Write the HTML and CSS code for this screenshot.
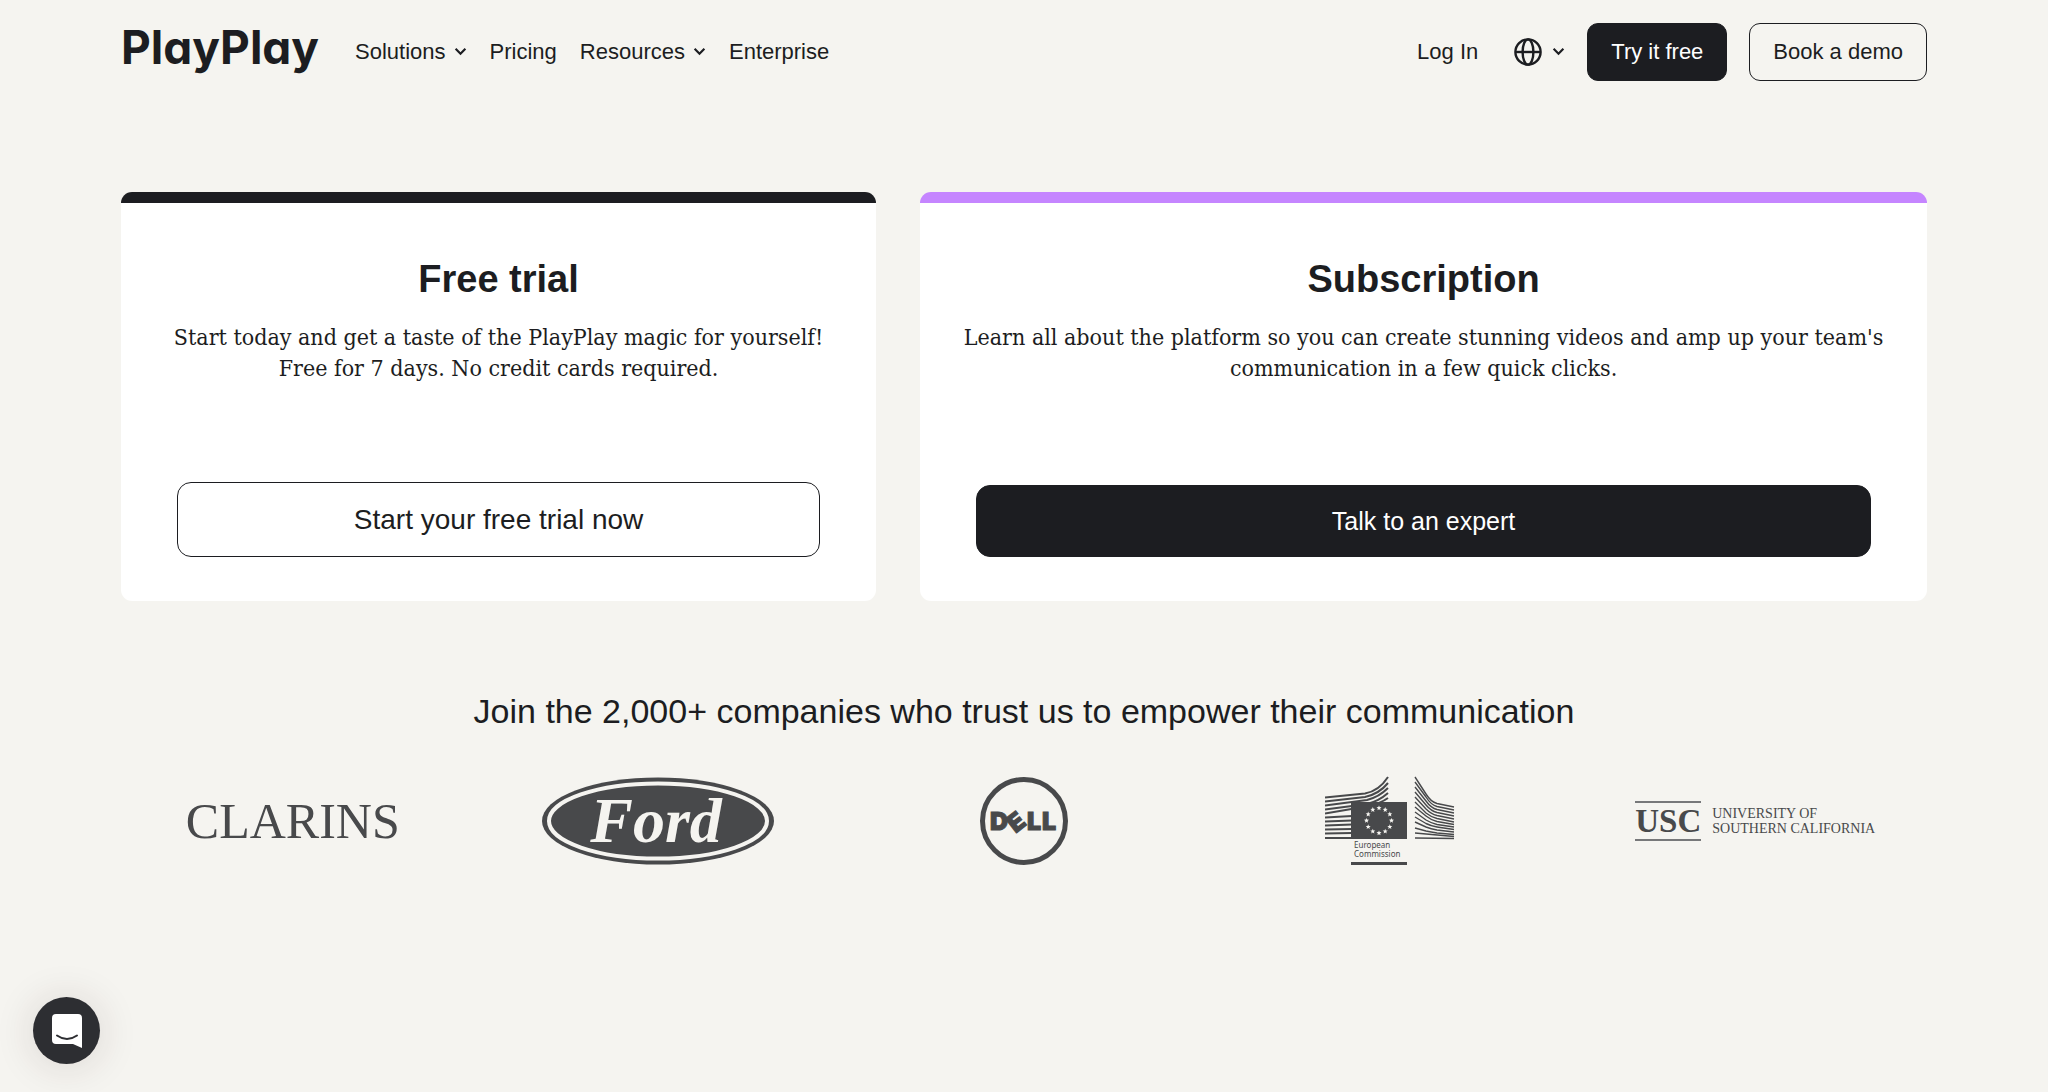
FILE: index.html
```html
<!DOCTYPE html>
<html lang="en">
	<head>
		<meta charset="UTF-8">
		<meta name="viewport" content="width=device-width, initial-scale=1">
		<title>PlayPlay Pricing</title>
		<link rel="stylesheet" href="styles.css">
	</head>
	<body>
		<header class="header">
			<a class="logo" href="#">PlayPlay</a>
			<nav class="nav">
				<button class="navitem" type="button">Solutions
					<svg class="chevron" viewBox="0 0 12 8"><path d="M1.5 1.5 L6 6 L10.5 1.5"/></svg>
				</button>
				<a class="navitem" href="#">Pricing</a>
				<button class="navitem" type="button">Resources
					<svg class="chevron" viewBox="0 0 12 8"><path d="M1.5 1.5 L6 6 L10.5 1.5"/></svg>
				</button>
				<a class="navitem" href="#">Enterprise</a>
			</nav>
			<div class="actions">
				<a class="navitem login" href="#">Log In</a>
				<button class="navitem language" type="button" aria-label="Language">
					<svg class="globe" viewBox="0 0 28 28">
						<circle cx="14" cy="14" r="12.6"/>
						<ellipse cx="14" cy="14" rx="5.4" ry="12.6"/>
						<path d="M1.4 14 H26.6"/>
					</svg>
					<svg class="chevron" viewBox="0 0 12 8"><path d="M1.5 1.5 L6 6 L10.5 1.5"/></svg>
				</button>
				<button class="btn dark" type="button">Try it free</button>
				<button class="btn outline" type="button">Book a demo</button>
			</div>
		</header>

		<main>
			<section class="plans">
				<div class="card trial">
					<h2>Free trial</h2>
					<p>Start today and get a taste of the PlayPlay magic for yourself!<br>Free for 7 days. No credit cards required.</p>
					<button class="cta outline" type="button">Start your free trial now</button>
				</div>
				<div class="card subscription">
					<h2>Subscription</h2>
					<p>Learn all about the platform so you can create stunning videos and amp up your team's communication in a few quick clicks.</p>
					<button class="cta dark" type="button">Talk to an expert</button>
				</div>
			</section>

			<section class="companies">
				<h3>Join the 2,000+ companies who trust us to empower their communication</h3>
				<div class="logos">
					<div class="clarins">CLARINS</div>

					<svg class="ford" viewBox="0 0 232 88">
						<ellipse class="ink" cx="116" cy="44" rx="116" ry="43.5"/>
						<ellipse class="ring" cx="116" cy="44" rx="109" ry="37.5"/>
						<text x="114" y="65" text-anchor="middle">Ford</text>
					</svg>

					<svg class="dell" viewBox="0 0 90 90">
						<circle cx="45" cy="45" r="41.5"/>
						<text x="11" y="54">D</text>
						<text x="29" y="54" transform="rotate(-38 38 45)">E</text>
						<text x="48" y="54">L</text>
						<text x="63" y="54">L</text>
					</svg>

					<svg class="commission" viewBox="0 0 130 90">
						<defs>
							<polygon id="star" class="star" points="0,-2.6 0.7,-0.9 2.5,-0.8 1.1,0.4 1.6,2.2 0,1.2 -1.6,2.2 -1.1,0.4 -2.5,-0.8 -0.7,-0.9"/>
						</defs>
						<!-- left sweep -->
						<g class="thick">
							<path d="M0 21.5 L40 17.5 Q54 15 63 1"/>
							<path d="M0 25.5 L40 21 Q54 18 63 7"/>
							<path d="M0 29.5 L42 24 Q54 21 63 12"/>
							<path d="M0 33.5 L42 28 Q54 25 63 17"/>
							<path d="M0 37.5 L44 30 Q56 27 63 22"/>
							<path d="M0 41.5 L27 40"/>
							<path d="M0 45.5 L27 44.5"/>
							<path d="M0 49.5 L27 48.5"/>
							<path d="M0 53.5 L27 53"/>
							<path d="M0 57.5 L27 57"/>
							<path d="M0 62 L27 62"/>
						</g>
						<!-- right sweep -->
						<g class="thin">
							<path d="M90 1 L101 18 Q106 26 112 27.5 L129 31"/>
							<path d="M90 6 L101 21 Q106 29 112 30.5 L129 34"/>
							<path d="M90 11 L101 25 Q106 32 112 33.5 L129 37"/>
							<path d="M90 16 L101 29 Q106 35 112 36.5 L129 40"/>
							<path d="M90 21 L101 33 Q106 38 112 39.5 L129 43"/>
							<path d="M90 26 L101 37 Q106 41 112 42.5 L129 46"/>
							<path d="M90 31 L101 40 Q106 44 112 45.5 L129 48.5"/>
							<path d="M90 36 L101 44 Q106 47 112 48.5 L129 51"/>
							<path d="M90 41 L101 47.5 Q106 50 112 51 L129 53.5"/>
							<path d="M90 46 L101 51 Q106 53 112 54 L129 56"/>
							<path d="M90 52 L101 55 Q106 56 112 57 L129 58.5"/>
							<path d="M90 57 L129 60.5"/>
							<path d="M90 62 L129 62.5"/>
						</g>
						<rect class="ink" x="26" y="26" width="56" height="37"/>
						<use href="#star" x="54" y="32"/>
						<use href="#star" x="60.2" y="33.7"/>
						<use href="#star" x="64.8" y="38.2"/>
						<use href="#star" x="66.5" y="44.5"/>
						<use href="#star" x="64.8" y="50.8"/>
						<use href="#star" x="60.2" y="55.3"/>
						<use href="#star" x="54" y="57"/>
						<use href="#star" x="47.8" y="55.3"/>
						<use href="#star" x="43.2" y="50.8"/>
						<use href="#star" x="41.5" y="44.5"/>
						<use href="#star" x="43.2" y="38.2"/>
						<use href="#star" x="47.8" y="33.7"/>
						<text x="29" y="72">European</text>
						<text x="29" y="81">Commission</text>
						<rect class="ink" x="26" y="86" width="56" height="3"/>
					</svg>

					<div class="usc">
						<span class="uscmark">USC</span>
						<span class="uscname">UNIVERSITY OF<br>SOUTHERN CALIFORNIA</span>
					</div>
				</div>
			</section>
		</main>

		<button class="chat" type="button" aria-label="Open chat">
			<svg viewBox="0 0 30 34">
				<path class="bubble" d="M4 0 H26 Q30 0 30 4 V34 L21 30 H4 Q0 30 0 26 V4 Q0 0 4 0 Z"/>
				<path class="smile" d="M5 21.5 Q15 28.5 25 21.5"/>
			</svg>
		</button>
	</body>
</html>
```

FILE: styles.css
```css
* {
	box-sizing: border-box;
}
body {
	margin: 0;
	min-height: 100vh;
	background-color: #f5f4f0;
	color: #1c1d21;
	font-family: "Liberation Sans", Arial, sans-serif;
}
a {
	color: inherit;
	text-decoration: none;
}
button {
	font-family: inherit;
	color: inherit;
	cursor: pointer;
}

/* header */
.header {
	display: flex;
	align-items: center;
	height: 103px;
	padding: 0 121px;
}
.logo {
	margin-right: 36px;
	padding-bottom: 10px;
	font-family: Inter, sans-serif;
	font-feature-settings: "cv11";
	font-size: 46px;
	line-height: 58px;
	font-weight: 700;
}
.nav {
	display: flex;
	gap: 23px;
}
.navitem {
	display: flex;
	align-items: center;
	gap: 8px;
	padding: 0;
	border: 0;
	background: none;
	font-size: 22px;
	line-height: 28px;
}
.chevron {
	width: 13px;
	height: 9px;
	fill: none;
	stroke: #1c1d21;
	stroke-width: 2;
}
.actions {
	display: flex;
	align-items: center;
	gap: 22px;
	margin-left: auto;
}
.login {
	margin-right: 14px;
}
.language {
	gap: 10px;
}
.globe {
	width: 28px;
	height: 28px;
	fill: none;
	stroke: #1c1d21;
	stroke-width: 2.4;
}
.btn {
	height: 58px;
	padding: 0 23px;
	border: 1px solid #1c1d21;
	border-radius: 11px;
	font-size: 22px;
}
.dark {
	background-color: #1c1d21;
	color: #fff;
}
.outline {
	background-color: transparent;
}

/* plans */
.plans {
	display: grid;
	grid-template-columns: 3fr 4fr;
	gap: 44px;
	padding: 89px 121px 0;
}
.card {
	display: flex;
	flex-direction: column;
	align-items: center;
	min-height: 409px;
	padding: 56px 34px 44px;
	border-radius: 11px;
	background: linear-gradient(#1c1d21 11px, #fff 11px);
	text-align: center;
}
.subscription {
	background: linear-gradient(#c585ff 11px, #fff 11px);
}
.card h2 {
	margin: 0;
	font-size: 38px;
	line-height: 62px;
}
.card p {
	margin: 12px 0 0;
	font-family: "DejaVu Serif Condensed", "DejaVu Serif", serif;
	font-size: 23px;
	line-height: 31px;
}
.cta {
	align-self: stretch;
	height: 75px;
	margin: auto 22px 0;
	border: 1px solid #1c1d21;
	border-radius: 14px;
	font-size: 28px;
}
.cta.dark {
	height: 72px;
	font-size: 25px;
}

/* companies */
.companies {
	padding: 88px 110px 0;
}
.companies h3 {
	margin: 0;
	font-size: 34px;
	line-height: 44px;
	font-weight: 400;
	text-align: center;
}
.logos {
	display: grid;
	grid-template-columns: repeat(5, 1fr);
	align-items: center;
	justify-items: center;
	margin-top: 43px;
	color: #48494b;
	fill: #48494b;
}
.clarins {
	font-family: "Liberation Serif", serif;
	font-size: 50px;
	line-height: 60px;
}
.ford {
	width: 232px;
	height: 88px;
}
.ford .ring {
	fill: none;
	stroke: #f5f4f0;
	stroke-width: 4;
}
.ford text {
	fill: #f5f4f0;
	font-family: "Liberation Serif", serif;
	font-size: 64px;
	font-style: italic;
	font-weight: 700;
}
.dell {
	width: 90px;
	height: 90px;
}
.dell circle {
	fill: none;
	stroke: #48494b;
	stroke-width: 5;
}
.dell text {
	font-family: Inter, sans-serif;
	font-size: 25px;
	font-weight: 900;
	stroke: #48494b;
	stroke-width: 1;
}
.commission {
	width: 130px;
	height: 90px;
}
.commission text {
	font-family: "Noto Sans", sans-serif;
	font-size: 8px;
}
.thick {
	fill: none;
	stroke: #48494b;
	stroke-width: 2;
}
.thin {
	fill: none;
	stroke: #48494b;
	stroke-width: 1.4;
}
.star {
	fill: #f5f4f0;
}
.usc {
	display: flex;
	align-items: center;
	gap: 11px;
	font-family: "Liberation Serif", serif;
}
.uscmark {
	border-top: 2px solid #77787a;
	border-bottom: 2px solid #77787a;
	font-size: 33px;
	line-height: 36px;
	font-weight: 700;
}
.uscname {
	font-size: 14px;
	line-height: 15px;
}

/* chat launcher */
.chat {
	position: fixed;
	left: 33px;
	bottom: 28px;
	display: flex;
	align-items: center;
	justify-content: center;
	width: 67px;
	height: 67px;
	padding: 0;
	border: 0;
	border-radius: 50%;
	background-color: #2d2e32;
	box-shadow: 0 2px 40px rgba(60, 30, 30, 0.14);
}
.chat svg {
	width: 30px;
	height: 34px;
}
.bubble {
	fill: #fff;
}
.smile {
	fill: none;
	stroke: #2d2e32;
	stroke-width: 2;
	stroke-linecap: round;
}
```
